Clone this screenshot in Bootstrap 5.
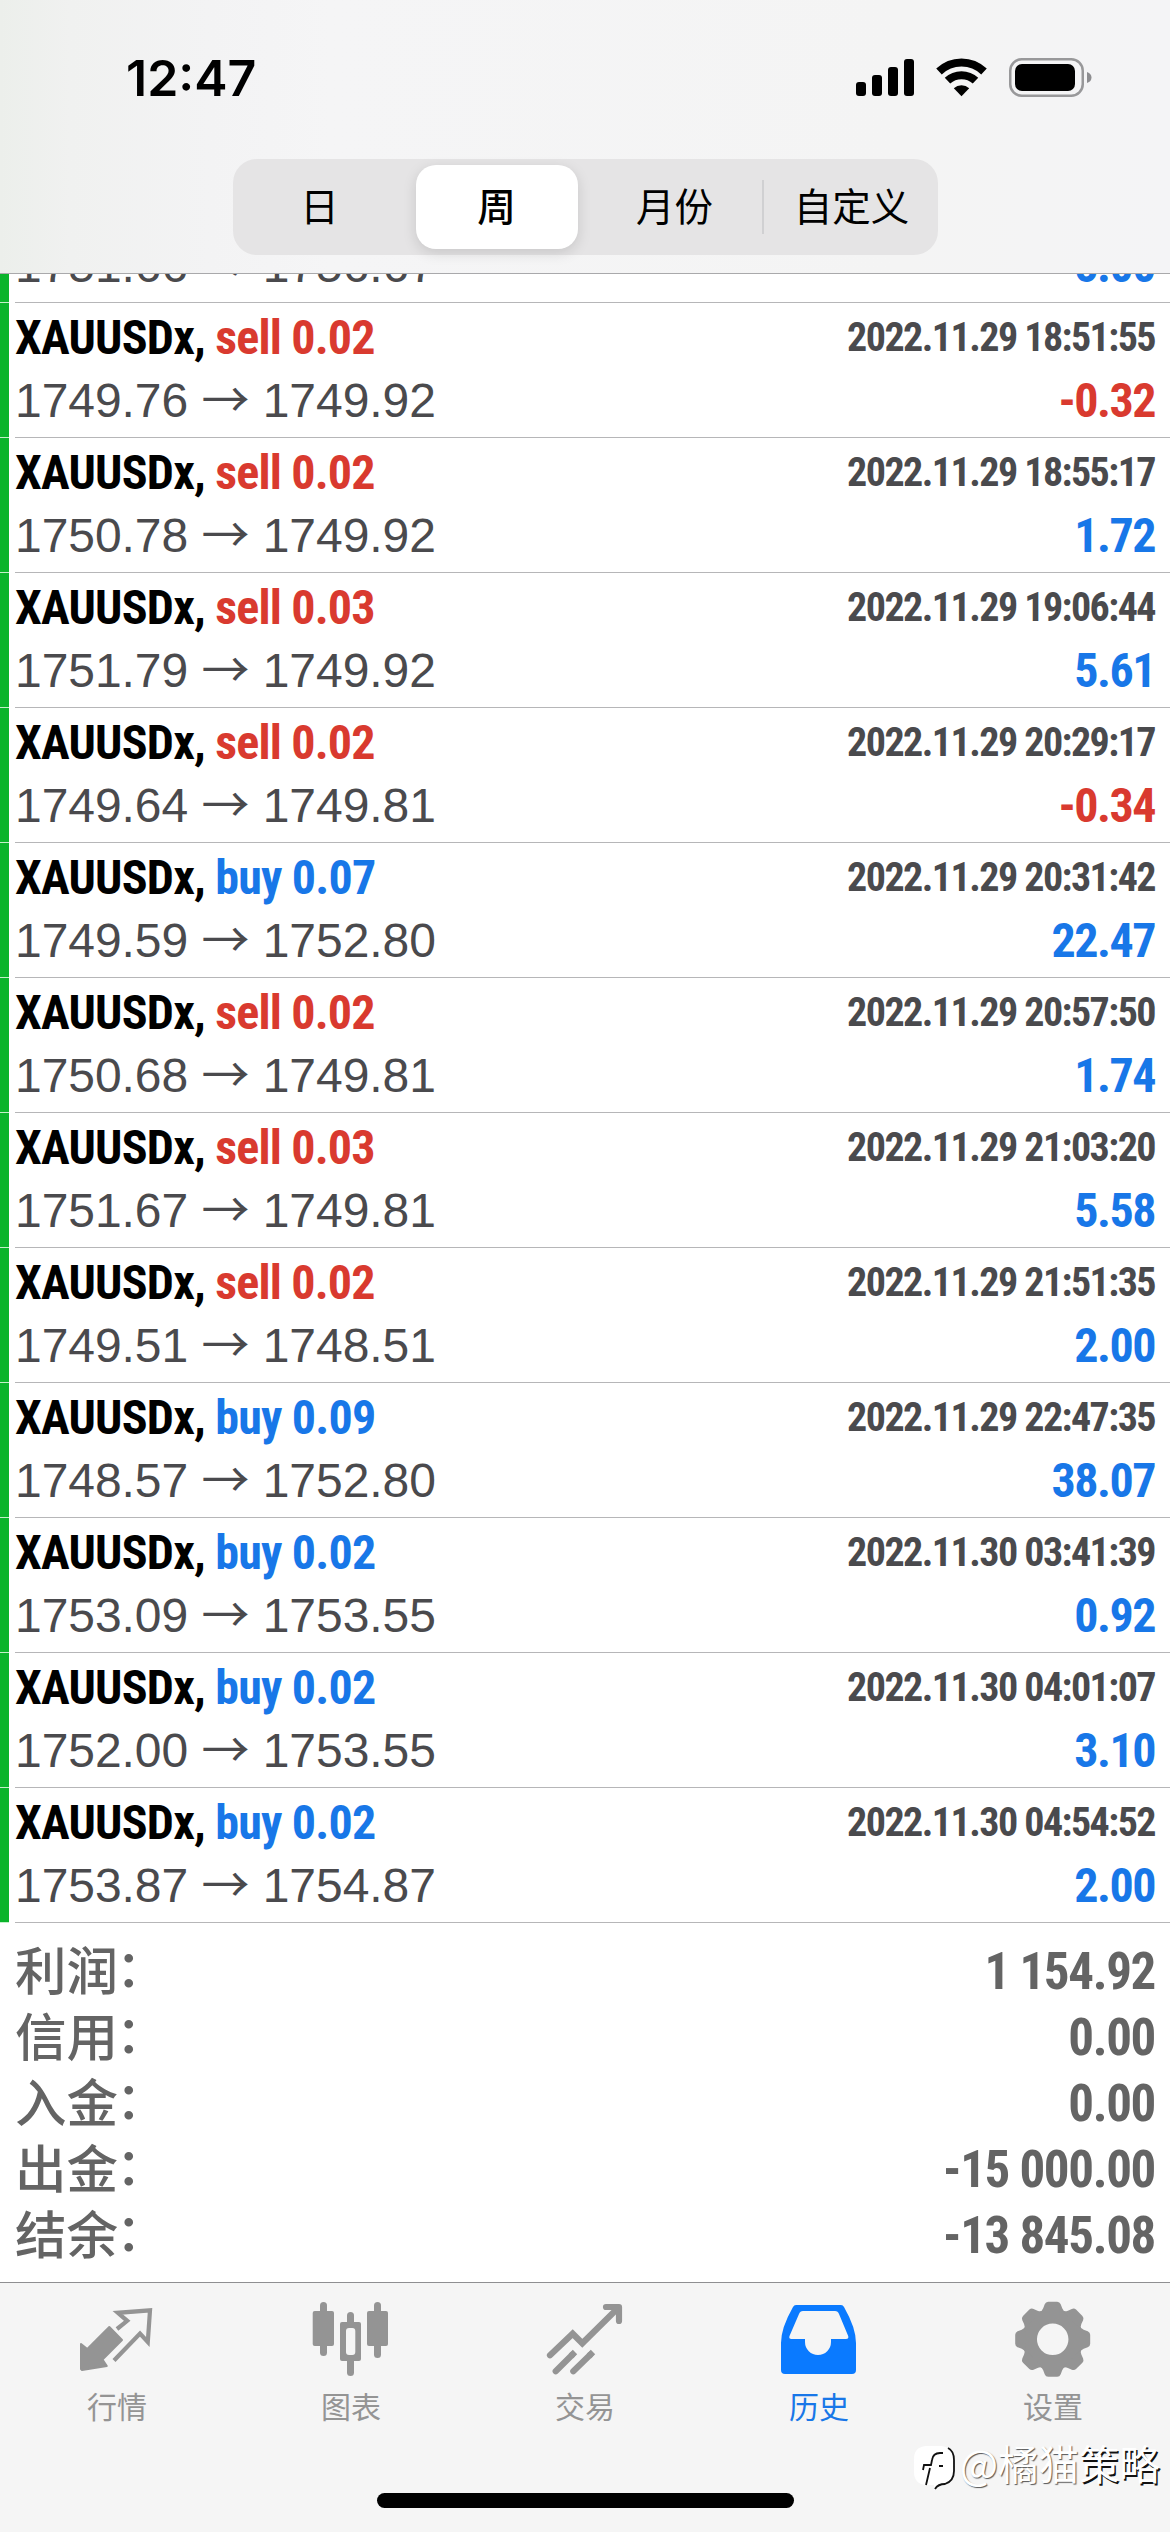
<!DOCTYPE html>
<html lang="zh-CN">
<head>
<meta charset="utf-8">
<meta name="viewport" content="width=device-width, initial-scale=1">
<title>历史</title>
<link href="https://cdn.jsdelivr.net/npm/bootstrap@5.3.0/dist/css/bootstrap.min.css" rel="stylesheet">
<style>
  :root { --buy: #1877e8; --sell: #d93a2f; --ink: #4a4a4d; --sum: #646464; --tab: #949494; }
  body { width: 1170px; height: 2532px; overflow: hidden; background: #fff; font-family: "Liberation Sans", "Noto Sans CJK SC", sans-serif; }
  .cond { font-family: "Roboto Condensed", Roboto, "Noto Sans CJK SC", sans-serif; font-stretch: 75%; font-weight: 700; white-space: pre; }
  .screen { height: 2532px; }

  .top-bar { height: 274px; border-bottom: 1px solid #a9a9ab; background: linear-gradient(90deg, #ecefeb 0, #f0f1f0 70px, #f3f3f4 210px, #f5f5f6 330px, #f4f4f4 900px, #f4f4f6 100%); }
  .status { height: 159px; padding: 48px 78px 0 126px; }
  .clock { font: 600 50px/60px Inter, sans-serif; letter-spacing: 0; color: #000; }
  .status svg { margin-top: 8px; }
  .segments { width: 705px; height: 96px; border-radius: 24px; background: #e5e4e5; padding: 6px 7px; font: 400 38.5px/79px "Noto Sans CJK SC", sans-serif; color: #000; }
  .segments > div { text-align: center; height: 84px; }
  .seg-day { width: 160px; }
  .seg-on { width: 162px; margin-left: 16px; background: #fff; border-radius: 20px; font-weight: 500; box-shadow: 0 4px 14px rgba(0,0,0,.13); }
  .seg-month { width: 184px; padding-left: 10px; }
  .segments > .seg-line { width: 2px; height: 54px; background: #d0d0d2; }
  .seg-custom { padding-left: 9px; }

  .trades { height: 1649px; overflow: hidden; }
  .trade { height: 135px; flex: none; border-left: 9px solid #0ab42b; position: relative; padding: 5px 15px 0 6px; }
  .trade::after { content: ""; position: absolute; left: 6px; right: 0; bottom: 0; height: 1px; background: #b6b6b8; }
  .trade::before { content: ""; position: absolute; left: -9px; width: 9px; bottom: 0; height: 1px; background: #c3f0c9; }
  .trade-name { font-size: 48px; line-height: 60px; letter-spacing: -.8px; color: #000; }
  .trade-time { font-size: 40px; line-height: 60px; letter-spacing: -1.55px; color: var(--ink); }
  .trade-move { font-size: 48px; line-height: 60px; letter-spacing: -.05px; color: var(--ink); white-space: pre; }
  .trade-move i { font: 400 48px/1 "Noto Sans CJK SC"; }
  .trade-gain { font-size: 48px; line-height: 60px; letter-spacing: -1.5px; }
  .is-buy { color: var(--buy); } .is-sell { color: var(--sell); }

  .totals { height: 359px; padding: 16px 15px 0; color: var(--sum); }
  .totals > div { height: 66px; }
  .totals dt { font: 500 51.5px/58px "Noto Sans CJK SC", sans-serif; }
  .totals dt span { font-family: "Noto Sans CJK TC"; margin-left: -15px; }
  .totals dd { font-size: 51px; line-height: 66px; margin: 0; letter-spacing: -1.35px; }

  .tab-bar { height: 250px; border-top: 1px solid #8f8f91; background: #f5f5f5; position: relative; color: var(--tab); }
  .tab-bar .nav-item { padding-top: 17px; font: 400 30px/36px "Noto Sans CJK SC", sans-serif; }
  .tab-bar svg { width: 80px; height: 80px; margin-bottom: 7px; }
  .tab-on { color: #0a7aff; } .tab-on span { color: #1877e8; }
  .home-bar { width: 417px; height: 15px; border-radius: 8px; background: #000; position: absolute; left: 377px; top: 210px; }
  .stamp { position: absolute; right: 10px; top: 152px; height: 56px; font: 400 40.500px/56px "Noto Sans CJK SC", sans-serif; color: #fff; text-shadow: 1px 1px 1px #555; }
  .stamp b { font-weight: 400; text-shadow: 1.5px 1.5px 0 #111; }
  .tab-bar .stamp svg { width: 44px; height: 50px; margin: 8px 4px 0 0; }
</style>
</head>
<body>
<div class="screen d-flex flex-column">
  <header class="top-bar flex-shrink-0">
    <div class="status d-flex justify-content-between align-items-start">
      <div class="clock">12:47</div>
      <svg width="236" height="44" viewBox="856 56 236 44">
        <g fill="#000"><rect x="856" y="82" width="10" height="14" rx="3"/><rect x="872" y="75" width="10" height="21" rx="3"/><rect x="888" y="67" width="10" height="29" rx="3"/><rect x="904" y="59" width="10" height="37" rx="3"/></g>
        <g fill="none" stroke="#000" stroke-width="8"><path d="M939 71.5a32.500 32.500 0 0 1 45 0"/><path d="M947.500 80.700a20.500 20.500 0 0 1 28 0"/></g>
        <path d="M953.800 88.200a11.500 11.500 0 0 1 15.400 0l-7.700 8z"/>
        <rect x="1010.250" y="59.250" width="72.500" height="36.500" rx="11.500" fill="none" stroke="#98989a" stroke-width="2.500"/>
        <rect x="1015" y="64" width="60" height="27" rx="7"/>
        <path d="M1087 72q4.500 1.500 4.500 5.500t-4.500 5.500z" fill="#8d8d90"/>
      </svg>
    </div>
    <div class="segments d-flex align-items-center mx-auto">
      <div class="seg-day">日</div><div class="seg-on">周</div><div class="seg-month">月份</div><div class="seg-line"></div><div class="seg-custom flex-fill">自定义</div>
    </div>
  </header>

  <main class="trades d-flex flex-column justify-content-end flex-shrink-0" id="trades"></main>

  <dl class="totals mb-0 flex-shrink-0">
    <div class="d-flex justify-content-between"><dt>利润<span lang="zh-TW">：</span></dt><dd class="cond">1 154.92</dd></div>
    <div class="d-flex justify-content-between"><dt>信用<span lang="zh-TW">：</span></dt><dd class="cond">0.00</dd></div>
    <div class="d-flex justify-content-between"><dt>入金<span lang="zh-TW">：</span></dt><dd class="cond">0.00</dd></div>
    <div class="d-flex justify-content-between"><dt>出金<span lang="zh-TW">：</span></dt><dd class="cond">-15 000.00</dd></div>
    <div class="d-flex justify-content-between"><dt>结余<span lang="zh-TW">：</span></dt><dd class="cond">-13 845.08</dd></div>
  </dl>

  <nav class="tab-bar flex-shrink-0">
    <div class="nav nav-fill flex-nowrap">
      <div class="nav-item w-100 d-flex flex-column align-items-center">
        <svg viewBox="0 0 80 80"><path fill="currentColor" stroke="currentColor" stroke-width="2" stroke-linejoin="round" d="M32.300 27 45 40 25.500 59.500 29.800 66 5 70 4 69V44l6.300 5z"/><path fill="none" stroke="currentColor" stroke-width="4.200" d="M40 29 50.200 20.800 40.800 12.800 73 10.300 70.800 42 63 33.500 37 60.500"/></svg><span>行情</span></div>
      <div class="nav-item w-100 d-flex flex-column align-items-center">
        <svg viewBox="0 0 80 80" fill="currentColor"><rect x="1.700" y="11" width="21.300" height="35" rx="2"/><rect x="9" y="2" width="7" height="54" rx="3.500"/><rect x="56" y="11" width="21" height="35" rx="2"/><rect x="63" y="2" width="7" height="56" rx="3.500"/><rect x="29" y="22" width="21" height="39" rx="2"/><rect x="36" y="12" width="7" height="64" rx="3.500"/><rect x="35" y="28" width="9.300" height="27" rx="3" fill="#f5f5f5"/></svg><span>图表</span></div>
      <div class="nav-item w-100 d-flex flex-column align-items-center">
        <svg viewBox="0 0 80 80" fill="none" stroke="currentColor" stroke-width="6.200" stroke-linecap="round" stroke-linejoin="round"><path stroke-linejoin="miter" d="M5 55.300 27.700 33.700 37.300 43.300 73 8"/><path d="M61 7h13v14"/><path d="M10.700 71.300 27.500 54.500M28.300 71.300 45.500 54.500"/><path stroke-linecap="butt" d="M26 56l4-4M44 56l4-4"/></svg><span>交易</span></div>
      <div class="nav-item w-100 d-flex flex-column align-items-center tab-on">
        <svg viewBox="0 0 80 80"><path fill="currentColor" fill-rule="evenodd" d="M17 5h45q2 0 3 2 12 21 12 36v27q0 4-4 4H6q-4 0-4-4V43Q2 28 14 7q1-2 3-2zM24 11q-3 0-4 3L10.500 36q-1 3 2 3H26v3a13 13 0 0 0 26 0v-3h15q3 0 2.200-3L60 14q-1-3-4-3z"/></svg><span>历史</span></div>
      <div class="nav-item w-100 d-flex flex-column align-items-center">
        <svg viewBox="-39.700 -39.300 80 80" fill="currentColor"><defs><path id="tooth" d="M-13-27Q-10.500-28.500-9.500-31L-8-35Q-7-37.500-4.500-37.500h9Q7-37.500 8-35l1.500 4q1 2.500 3.500 4z"/></defs><circle r="23" fill="none" stroke="currentColor" stroke-width="14.500"/><use href="#tooth"/><use href="#tooth" transform="rotate(45)"/><use href="#tooth" transform="rotate(90)"/><use href="#tooth" transform="rotate(135)"/><use href="#tooth" transform="rotate(180)"/><use href="#tooth" transform="rotate(225)"/><use href="#tooth" transform="rotate(270)"/><use href="#tooth" transform="rotate(315)"/></svg><span>设置</span></div>
    </div>
    <div class="home-bar"></div>
    <div class="stamp d-flex">
      <svg viewBox="0 0 44 50"><path fill="#fff" d="M14 3h15q12 1 12 13v12q0 11-11 13l-8 6v-5h-8Q2 41 2 29V16Q2 4 14 3z"/><path fill="none" stroke="#111" stroke-width="1.800" d="M36 5q6 3 6 12v11q0 10-9 13-7 0-10 5M31 10H28q-7 0-8 7l-1 5h-7l-1 5M18 25l-4 17M27 23h4"/></svg>
      <span>@橘猫<b>策略</b></span>
    </div>
  </nav>
</div>
<script src="https://cdn.jsdelivr.net/npm/bootstrap@5.3.0/dist/js/bootstrap.bundle.min.js"></script>
<script>
  const rows = [
    ['buy 0.01', '2022.11.29 18:48:20', '1751.66', '1756.67', '5.00'],
    ['sell 0.02', '2022.11.29 18:51:55', '1749.76', '1749.92', '-0.32'],
    ['sell 0.02', '2022.11.29 18:55:17', '1750.78', '1749.92', '1.72'],
    ['sell 0.03', '2022.11.29 19:06:44', '1751.79', '1749.92', '5.61'],
    ['sell 0.02', '2022.11.29 20:29:17', '1749.64', '1749.81', '-0.34'],
    ['buy 0.07', '2022.11.29 20:31:42', '1749.59', '1752.80', '22.47'],
    ['sell 0.02', '2022.11.29 20:57:50', '1750.68', '1749.81', '1.74'],
    ['sell 0.03', '2022.11.29 21:03:20', '1751.67', '1749.81', '5.58'],
    ['sell 0.02', '2022.11.29 21:51:35', '1749.51', '1748.51', '2.00'],
    ['buy 0.09', '2022.11.29 22:47:35', '1748.57', '1752.80', '38.07'],
    ['buy 0.02', '2022.11.30 03:41:39', '1753.09', '1753.55', '0.92'],
    ['buy 0.02', '2022.11.30 04:01:07', '1752.00', '1753.55', '3.10'],
    ['buy 0.02', '2022.11.30 04:54:52', '1753.87', '1754.87', '2.00']
  ];
  document.getElementById('trades').innerHTML = rows.map(([op, time, from, to, gain]) => `
    <div class="trade">
      <div class="d-flex justify-content-between align-items-start">
        <div class="trade-name cond">XAUUSDx, <span class="is-${op.split(' ')[0]}">${op}</span></div>
        <div class="trade-time cond">${time}</div>
      </div>
      <div class="d-flex justify-content-between" style="margin-top:3px">
        <div class="trade-move">${from} <i>→</i> ${to}</div>
        <div class="trade-gain cond ${gain[0] === '-' ? 'is-sell' : 'is-buy'}">${gain}</div>
      </div>
    </div>`).join('');
</script>
</body>
</html>
